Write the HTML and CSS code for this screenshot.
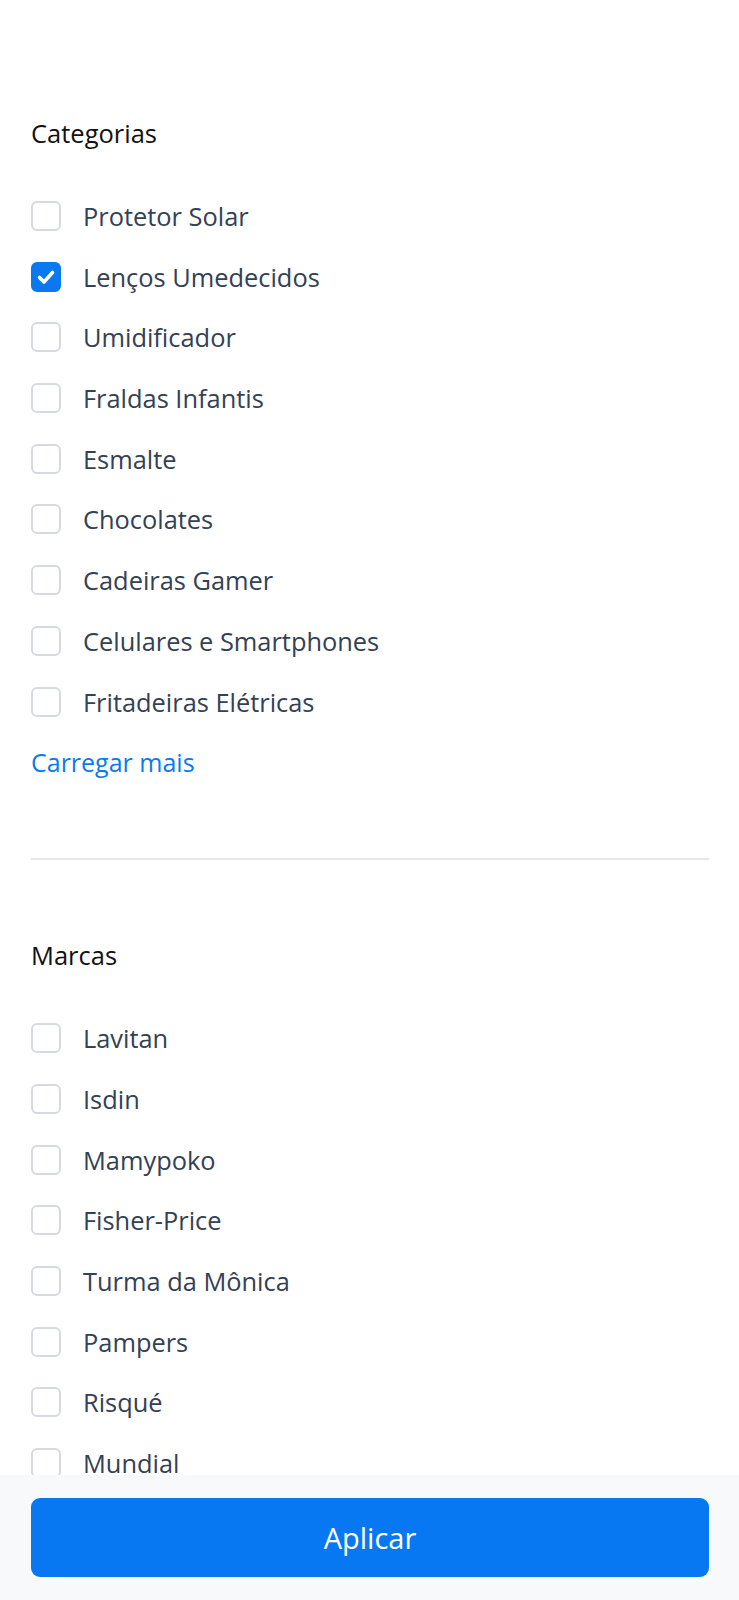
FILE: index.html
```html
<!DOCTYPE html>
<html lang="pt-BR">
<head>
<meta charset="utf-8">
<title>Filtros</title>
<link rel="stylesheet" href="styles.css">
</head>
<body>
<main class="filters">
  <section class="group">
    <h2 class="group-title">Categorias</h2>
    <ul class="options">
      <li class="option"><span class="box"></span><span class="label">Protetor Solar</span></li>
      <li class="option"><span class="box checked"><svg viewBox="0 0 30 30" class="tick"><path d="M8.5 15.5 L13 20 L21.5 10.5" fill="none" stroke="#fff" stroke-width="3.6" stroke-linecap="round" stroke-linejoin="round"/></svg></span><span class="label">Lenços Umedecidos</span></li>
      <li class="option"><span class="box"></span><span class="label">Umidificador</span></li>
      <li class="option"><span class="box"></span><span class="label">Fraldas Infantis</span></li>
      <li class="option"><span class="box"></span><span class="label">Esmalte</span></li>
      <li class="option"><span class="box"></span><span class="label">Chocolates</span></li>
      <li class="option"><span class="box"></span><span class="label">Cadeiras Gamer</span></li>
      <li class="option"><span class="box"></span><span class="label">Celulares e Smartphones</span></li>
      <li class="option"><span class="box"></span><span class="label">Fritadeiras Elétricas</span></li>
      <li class="more"><a class="more-link" href="#">Carregar mais</a></li>
    </ul>
  </section>
  <section class="group">
    <h2 class="group-title">Marcas</h2>
    <ul class="options">
      <li class="option"><span class="box"></span><span class="label">Lavitan</span></li>
      <li class="option"><span class="box"></span><span class="label">Isdin</span></li>
      <li class="option"><span class="box"></span><span class="label">Mamypoko</span></li>
      <li class="option"><span class="box"></span><span class="label">Fisher-Price</span></li>
      <li class="option"><span class="box"></span><span class="label">Turma da Mônica</span></li>
      <li class="option"><span class="box"></span><span class="label">Pampers</span></li>
      <li class="option"><span class="box"></span><span class="label">Risqué</span></li>
      <li class="option"><span class="box"></span><span class="label">Mundial</span></li>
      <li class="option"><span class="box"></span><span class="label">Nivea</span></li>
    </ul>
  </section>
</main>
<footer class="footer">
  <button class="apply" type="button">Aplicar</button>
</footer>
</body>
</html>
```
FILE: styles.css
```css
* { box-sizing: border-box; }
html, body { margin: 0; padding: 0; background: #ffffff; }
body {
  font-family: "Open Sans", "Noto Sans", sans-serif;
  color: #334155;
}
.filters {
  padding: 38px 30px 200px 31px;
}
.group {
  padding: 80px 0 81px;
  border-bottom: 2px solid #e5e7eb;
}
.group + .group { padding-top: 80px; border-bottom: none; }
.group-title {
  margin: 0 0 53px;
  font-size: 25.5px;
  font-weight: 400;
  line-height: 30px;
  color: #111111;
}
.options {
  list-style: none;
  margin: 0;
  padding: 0;
  display: flex;
  flex-direction: column;
  gap: 30.7px;
}
.option {
  display: flex;
  align-items: center;
  gap: 22px;
  height: 30px;
}
.box {
  width: 30px;
  height: 30px;
  flex: none;
  border: 2px solid #d6dae0;
  border-radius: 6px;
  background: #fff;
  display: flex;
  align-items: center;
  justify-content: center;
}
.box.checked {
  background: #0a78f0;
  border-color: #0a78f0;
}
.tick { width: 30px; height: 30px; display: block; flex: none; }
.label {
  font-size: 25.4px;
  line-height: 30px;
  white-space: nowrap;
}
.more { height: 30px; display: flex; align-items: center; }
.more-link {
  font-size: 25px;
  line-height: 30px;
  color: #0a7aef;
  text-decoration: none;
}
.footer {
  position: fixed;
  left: 0;
  right: 0;
  bottom: 0;
  height: 125px;
  background: #f8f9fb;
  padding: 23px 30px 0 31px;
}
.apply {
  display: block;
  width: 100%;
  height: 79px;
  border: none;
  border-radius: 9px;
  background: #0778f2;
  color: #ffffff;
  font-family: inherit;
  font-size: 29px;
  font-weight: 400;
  cursor: pointer;
}
```
